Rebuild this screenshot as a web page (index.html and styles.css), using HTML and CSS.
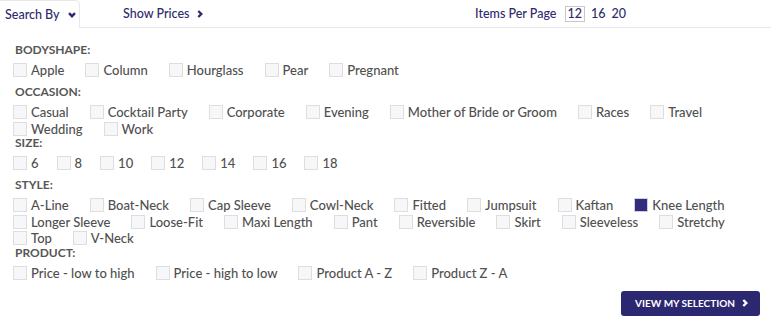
FILE: index.html
```html
<!DOCTYPE html>
<html lang="en">
<head>
    <meta charset="UTF-8">
    <meta name="viewport" content="width=device-width, initial-scale=1.0">
    <title>Search By</title>
    <link rel="stylesheet" href="styles.css">
</head>
<body>
    <div class="toolbar">
        <div class="tab">Search By
            <svg class="chev-down" width="8" height="6" viewBox="0 0 8 6"><path d="M1 1.2 L4 4.2 L7 1.2" /></svg>
        </div>
        <div class="show-prices">Show Prices
            <svg class="chev-right" width="6" height="8" viewBox="0 0 6 8"><path d="M1.3 1 L4.3 4 L1.3 7" /></svg>
        </div>
        <div class="per-page">
            Items Per Page
            <span class="page-opt active">12</span>
            <span class="page-opt">16</span>
            <span class="page-opt">20</span>
        </div>
    </div>

    <div class="filters">
        <div class="group">
            <div class="group-title">Bodyshape:</div>
            <div class="options">
                <div class="row">
                    <label class="opt"><span class="box"></span>Apple</label>
                    <label class="opt"><span class="box"></span>Column</label>
                    <label class="opt"><span class="box"></span>Hourglass</label>
                    <label class="opt"><span class="box"></span>Pear</label>
                    <label class="opt"><span class="box"></span>Pregnant</label>
                </div>
            </div>
        </div>

        <div class="group">
            <div class="group-title">Occasion:</div>
            <div class="options">
                <div class="row">
                    <label class="opt"><span class="box"></span>Casual</label>
                    <label class="opt"><span class="box"></span>Cocktail Party</label>
                    <label class="opt"><span class="box"></span>Corporate</label>
                    <label class="opt"><span class="box"></span>Evening</label>
                    <label class="opt"><span class="box"></span>Mother of Bride or Groom</label>
                    <label class="opt"><span class="box"></span>Races</label>
                    <label class="opt"><span class="box"></span>Travel</label>
                </div>
                <div class="row">
                    <label class="opt"><span class="box"></span>Wedding</label>
                    <label class="opt"><span class="box"></span>Work</label>
                </div>
            </div>
        </div>

        <div class="group">
            <div class="group-title">Size:</div>
            <div class="options">
                <div class="row">
                    <label class="opt size"><span class="box"></span>6</label>
                    <label class="opt size"><span class="box"></span>8</label>
                    <label class="opt size"><span class="box"></span>10</label>
                    <label class="opt size"><span class="box"></span>12</label>
                    <label class="opt size"><span class="box"></span>14</label>
                    <label class="opt size"><span class="box"></span>16</label>
                    <label class="opt size"><span class="box"></span>18</label>
                </div>
            </div>
        </div>

        <div class="group">
            <div class="group-title">Style:</div>
            <div class="options">
                <div class="row">
                    <label class="opt"><span class="box"></span>A-Line</label>
                    <label class="opt"><span class="box"></span>Boat-Neck</label>
                    <label class="opt"><span class="box"></span>Cap Sleeve</label>
                    <label class="opt"><span class="box"></span>Cowl-Neck</label>
                    <label class="opt"><span class="box"></span>Fitted</label>
                    <label class="opt"><span class="box"></span>Jumpsuit</label>
                    <label class="opt"><span class="box"></span>Kaftan</label>
                    <label class="opt"><span class="box checked"></span>Knee Length</label>
                </div>
                <div class="row">
                    <label class="opt"><span class="box"></span>Longer Sleeve</label>
                    <label class="opt"><span class="box"></span>Loose-Fit</label>
                    <label class="opt"><span class="box"></span>Maxi Length</label>
                    <label class="opt"><span class="box"></span>Pant</label>
                    <label class="opt"><span class="box"></span>Reversible</label>
                    <label class="opt"><span class="box"></span>Skirt</label>
                    <label class="opt"><span class="box"></span>Sleeveless</label>
                    <label class="opt"><span class="box"></span>Stretchy</label>
                </div>
                <div class="row">
                    <label class="opt"><span class="box"></span>Top</label>
                    <label class="opt"><span class="box"></span>V-Neck</label>
                </div>
            </div>
        </div>

        <div class="group">
            <div class="group-title">Product:</div>
            <div class="options">
                <div class="row">
                    <label class="opt"><span class="box"></span>Price - low to high</label>
                    <label class="opt"><span class="box"></span>Price - high to low</label>
                    <label class="opt"><span class="box"></span>Product A - Z</label>
                    <label class="opt"><span class="box"></span>Product Z - A</label>
                </div>
            </div>
        </div>

        <div class="actions">
            <button class="view-btn">View My Selection
                <svg class="chev-right" width="6" height="8" viewBox="0 0 6 8"><path d="M1.3 1 L4.3 4 L1.3 7" /></svg>
            </button>
        </div>
    </div>
</body>
</html>
```

FILE: styles.css
```css
body { margin: 0; font-family: Lato, "Open Sans", sans-serif; background: #fff; color: #505050; }

.toolbar {
    display: flex;
    align-items: center;
    height: 27px;
    border-bottom: 1px solid #e8e8e8;
    color: #2e2a6e;
    font-size: 12.5px;
    font-weight: 500;
}
.tab {
    display: flex;
    align-items: center;
    box-sizing: border-box;
    width: 80px;
    height: 28px;
    margin-top: 1px;
    padding: 0 0 0 5px;
    border: 1px solid #e8e8e8;
    border-left: none;
    border-bottom: none;
    border-top-right-radius: 5px;
    background: #fff;
}
.chev-down { margin-left: 8px; fill: none; stroke: #2e2a6e; stroke-width: 2.4; }
.chev-right { fill: none; stroke: #2e2a6e; stroke-width: 2.4; }
.show-prices { display: flex; align-items: center; margin-left: 43px; }
.show-prices .chev-right { margin-left: 8px; }
.per-page { display: flex; align-items: center; margin-left: auto; margin-right: 145px; }
.page-opt { margin-left: 6px; }
.page-opt.active {
    margin-left: 8px;
    padding: 0 2px;
    line-height: 14px;
    border: 1px solid #c8c8c8;
}

.filters { padding: 16px 11px 0 13px; }
.group-title {
    padding-left: 2px;
    font-size: 12px;
    font-weight: bold;
    line-height: 12px;
    text-transform: uppercase;
    color: #575757;
}
.options { margin-top: 6px; min-height: 24px; }
.row { display: flex; height: 16.5px; align-items: center; }
.opt {
    display: flex;
    align-items: center;
    margin-right: 21px;
    font-size: 13px;
    font-weight: 500;
    line-height: 14px;
    white-space: nowrap;
}
.opt.size { margin-right: 18px; }
.box {
    box-sizing: border-box;
    width: 14px;
    height: 14px;
    margin-right: 4px;
    border: 1px solid #dedede;
    background: #f7f7fa;
}
.box.checked { background: #332b7e; border-color: #cfcfe0; }

.actions { display: flex; justify-content: flex-end; margin-top: 2px; }
.view-btn {
    display: flex;
    align-items: center;
    height: 25px;
    padding: 0 12px 0 14px;
    border: none;
    border-radius: 3px;
    background: #2c2771;
    color: #fff;
    font-family: Lato, sans-serif;
    font-size: 10px;
    font-weight: bold;
    text-transform: uppercase;
    cursor: pointer;
}
.view-btn .chev-right { margin-left: 7px; stroke: #fff; }
```
